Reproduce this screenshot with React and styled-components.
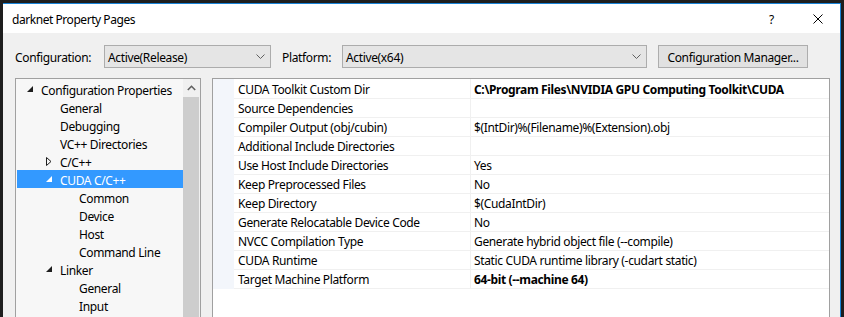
import React from 'react';
import styled, { createGlobalStyle } from 'styled-components';

const GlobalStyle = createGlobalStyle`
  html, body {
    margin: 0;
    padding: 0;
    background: #1e1e1e;
    overflow: hidden;
  }
  body {
    font-family: "Noto Sans", "Open Sans", sans-serif;
    font-size: 12px;
    letter-spacing: -0.35px;
    color: #000;
  }
`;

const treeItems = [
  { level: 0, arrow: 'open', label: 'Configuration Properties' },
  { level: 1, label: 'General' },
  { level: 1, label: 'Debugging' },
  { level: 1, label: 'VC++ Directories' },
  { level: 1, arrow: 'closed', label: 'C/C++' },
  { level: 1, arrow: 'open', label: 'CUDA C/C++', selected: true },
  { level: 2, label: 'Common' },
  { level: 2, label: 'Device' },
  { level: 2, label: 'Host' },
  { level: 2, label: 'Command Line' },
  { level: 1, arrow: 'open', label: 'Linker' },
  { level: 2, label: 'General' },
  { level: 2, label: 'Input' },
];

const properties = [
  { name: 'CUDA Toolkit Custom Dir', value: 'C:\\Program Files\\NVIDIA GPU Computing Toolkit\\CUDA', bold: true },
  { name: 'Source Dependencies', value: '' },
  { name: 'Compiler Output (obj/cubin)', value: '$(IntDir)%(Filename)%(Extension).obj' },
  { name: 'Additional Include Directories', value: '' },
  { name: 'Use Host Include Directories', value: 'Yes' },
  { name: 'Keep Preprocessed Files', value: 'No' },
  { name: 'Keep Directory', value: '$(CudaIntDir)' },
  { name: 'Generate Relocatable Device Code', value: 'No' },
  { name: 'NVCC Compilation Type', value: 'Generate hybrid object file (--compile)' },
  { name: 'CUDA Runtime', value: 'Static CUDA runtime library (-cudart static)' },
  { name: 'Target Machine Platform', value: '64-bit (--machine 64)', bold: true },
];

const Chevron = () => (
  <svg width="9" height="5" viewBox="0 0 9 5">
    <polyline points="0.5,0.5 4.5,4.5 8.5,0.5" fill="none" stroke="#606060" strokeWidth="1" />
  </svg>
);

const TreeArrow = ({ type, selected }) => {
  if (type === 'open') {
    return (
      <svg width="6" height="6" viewBox="0 0 6 6">
        <polygon points="6,0 6,6 0,6" fill={selected ? '#fff' : '#1e1e1e'} />
      </svg>
    );
  }
  return (
    <svg width="6" height="9" viewBox="0 0 6 9">
      <polygon points="0.5,0.5 5,4.5 0.5,8.5" fill="none" stroke="#1e1e1e" strokeWidth="1" />
    </svg>
  );
};

const App = () => {
  return (
    <>
      <GlobalStyle />
      <Screen>
        <Dialog>
          <TitleBar>
            <Title>darknet Property Pages</Title>
            <TitleButton>?</TitleButton>
            <CloseButton>
              <svg width="10" height="10" viewBox="0 0 10 10">
                <path d="M0.5 0.5 L9.5 9.5 M9.5 0.5 L0.5 9.5" stroke="#000" strokeWidth="1" />
              </svg>
            </CloseButton>
          </TitleBar>

          <Body>
            <Toolbar>
              <Label width="89px">Configuration:</Label>
              <Select width="167px">
                <span>Active(Release)</span>
                <Chevron />
              </Select>
              <Label width="60px" gap="11px">Platform:</Label>
              <Select width="305px">
                <span>Active(x64)</span>
                <Chevron />
              </Select>
              <Button>Configuration Manager...</Button>
            </Toolbar>

            <Panels>
              <TreePanel>
                <TreeList>
                  {treeItems.map((item, i) => (
                    <TreeRow key={i} level={item.level} selected={item.selected}>
                      <ArrowBox>
                        {item.arrow && <TreeArrow type={item.arrow} selected={item.selected} />}
                      </ArrowBox>
                      <TreeText>{item.label}</TreeText>
                    </TreeRow>
                  ))}
                </TreeList>
                <ScrollBar>
                  <ScrollButton>
                    <svg width="9" height="6" viewBox="0 0 9 6">
                      <polyline points="0.8,5 4.5,1.3 8.2,5" fill="none" stroke="#606060" strokeWidth="1.6" />
                    </svg>
                  </ScrollButton>
                  <ScrollThumb />
                </ScrollBar>
              </TreePanel>

              <GridPanel>
                {properties.map((p, i) => (
                  <PropRow key={i}>
                    <Gutter />
                    <NameCell>{p.name}</NameCell>
                    <ValueCell bold={p.bold}>{p.value}</ValueCell>
                  </PropRow>
                ))}
              </GridPanel>
            </Panels>
          </Body>
        </Dialog>
      </Screen>
    </>
  );
};

const Screen = styled.div`
  height: 317px;
  box-sizing: border-box;
  padding: 3px 3px 0 3px;
  overflow: hidden;
`;

const Dialog = styled.div`
  height: 100%;
  box-sizing: border-box;
  display: flex;
  flex-direction: column;
  background: #f0f0f0;
  border-top: 1px solid #1883d7;
  border-right: 1px solid #1883d7;
`;

const TitleBar = styled.div`
  height: 29px;
  box-sizing: border-box;
  padding: 2px 0 0 9px;
  flex-shrink: 0;
  display: flex;
  align-items: center;
  background: #fff;
`;

const Title = styled.div`
  flex: 1;
  letter-spacing: -0.45px;
`;

const TitleButton = styled.div`
  width: 14px;
  margin-right: 30px;
`;

const CloseButton = styled.div`
  display: flex;
  align-items: center;
  margin: -2px 17px 0 0;
`;

const Body = styled.div`
  flex: 1;
  min-height: 0;
  display: flex;
  flex-direction: column;
  padding: 12px 10px 0 12px;
`;

const Toolbar = styled.div`
  height: 23px;
  display: flex;
  align-items: center;
`;

const Label = styled.div`
  width: ${(p) => p.width};
  margin-left: ${(p) => p.gap || 0};
  padding-top: 2px;
  flex-shrink: 0;
`;

const Select = styled.div`
  width: ${(p) => p.width};
  height: 23px;
  box-sizing: border-box;
  display: flex;
  align-items: center;
  justify-content: space-between;
  padding: 2px 5px 0 3px;
  background: #e5e5e5;
  border: 1px solid #acacac;

  svg {
    margin-top: -2px;
  }
`;

const Button = styled.div`
  width: 150px;
  height: 23px;
  box-sizing: border-box;
  margin-left: 11px;
  padding-top: 2px;
  display: flex;
  align-items: center;
  justify-content: center;
  background: #e1e1e1;
  border: 1px solid #adadad;
`;

const Panels = styled.div`
  flex: 1;
  min-height: 0;
  display: flex;
  gap: 11px;
  margin-top: 10px;
`;

const TreePanel = styled.div`
  width: 186px;
  box-sizing: border-box;
  display: flex;
  background: #f7f7f7;
  border: 1px solid #a0a0a0;
  border-bottom: none;
`;

const TreeList = styled.div`
  flex: 1;
  padding: 1px 0 0 1px;
`;

const TreeRow = styled.div`
  height: 18px;
  display: flex;
  align-items: center;
  padding-left: ${(p) => 10 + p.level * 19}px;
  background: ${(p) => (p.selected ? '#3399ff' : 'transparent')};
  color: ${(p) => (p.selected ? '#fff' : '#000')};
  white-space: nowrap;
`;

const TreeText = styled.span`
  padding-top: 2px;
`;

const ArrowBox = styled.div`
  width: 14px;
  flex-shrink: 0;
  display: flex;
  align-items: center;
`;

const ScrollBar = styled.div`
  width: 17px;
  display: flex;
  flex-direction: column;
  background: #f0f0f0;
`;

const ScrollButton = styled.div`
  height: 17px;
  display: flex;
  align-items: center;
  justify-content: center;
`;

const ScrollThumb = styled.div`
  flex: 1;
  margin: 1px 1px 0 0;
  background: #cdcdcd;
`;

const GridPanel = styled.div`
  flex: 1;
  box-sizing: border-box;
  background: #fff;
  border: 1px solid #a0a0a0;
  border-bottom: none;
`;

const PropRow = styled.div`
  height: 19px;
  display: grid;
  grid-template-columns: 21px 237px 1fr;
`;

const Gutter = styled.div`
  background: #f3f6fb;
`;

const NameCell = styled.div`
  display: flex;
  align-items: center;
  padding: 2px 0 0 4px;
  border-right: 1px solid #f0f0f0;
  border-bottom: 1px solid #f0f0f0;
  white-space: nowrap;
`;

const ValueCell = styled.div`
  display: flex;
  align-items: center;
  padding: 2px 0 0 3px;
  border-bottom: 1px solid #f0f0f0;
  font-weight: ${(p) => (p.bold ? 700 : 400)};
  white-space: nowrap;
`;

export default App;
